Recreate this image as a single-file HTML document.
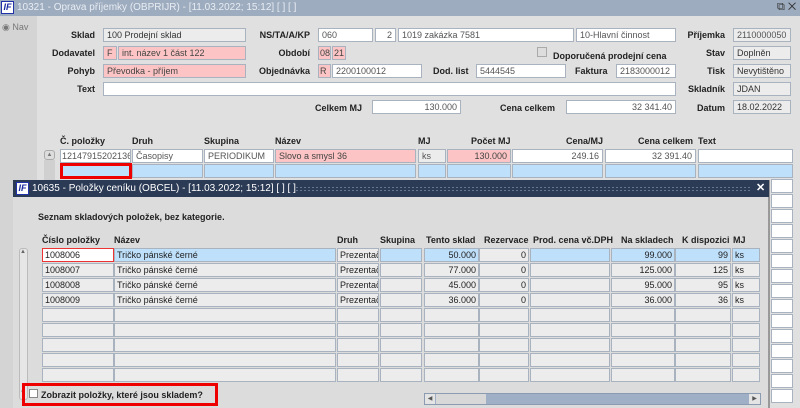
<!DOCTYPE html>
<html><head><meta charset="utf-8"><style>
*{box-sizing:border-box;margin:0;padding:0}
body{width:800px;height:408px;overflow:hidden;background:#dedede;font-family:"Liberation Sans",Arial,sans-serif;font-size:9px;color:#222;position:relative}
.a{position:absolute;white-space:nowrap}
.l{position:absolute;font-weight:bold;font-size:9px;text-align:right;white-space:nowrap;color:#222}
.f{position:absolute;height:14px;border:1px solid #a9b3bf;background:#fff;font-size:9px;line-height:12px;padding:0 3px;color:#555;white-space:nowrap;overflow:hidden}
.s{padding:0 1px}
.g{background:#ececec}.p{background:#fcc4c4;color:#444}.b{background:#bfe0fb}
.r{text-align:right}
.c{position:absolute;height:14px;border:1px solid #a9b3bf;background:#ececec;font-size:9px;line-height:12px;padding:0 2px;color:#222;overflow:hidden;white-space:nowrap}
.h{position:absolute;font-weight:bold;font-size:9px;white-space:nowrap}
</style></head><body>
<div class="a" style="left:0;top:0;width:800px;height:16px;background:#9eacbf"></div>
<div class="a" style="left:1px;top:1px;width:13px;height:13px;background:#fff;border:1px solid #2233aa;color:#1a2aa0;font-weight:bold;font-style:italic;font-size:9px;line-height:11px;text-align:center">IF</div>
<div class="a" style="left:17px;top:2px;color:#e8edf3;font-size:10px">10321 - Oprava příjemky (OBPRIJR) - [11.03.2022; 15:12] [ ] [ ]</div>
<div class="a" style="left:777px;top:1px;color:#333;font-size:11px">⧉ ✕</div>
<div class="a" style="left:0;top:16px;width:37px;height:392px;background:#d4d4d4"></div>
<div class="a" style="left:2px;top:22px;color:#777;font-size:9px">◉ Nav</div>
<div class="a" style="left:37px;top:16px;width:763px;height:392px;background:#e0e0e0"></div>

<div class="l" style="right:705px;top:30px">Sklad</div>
<div class="f g" style="left:103px;top:28px;width:143px;color:#333">100 Prodejní sklad</div>
<div class="l" style="right:490px;top:30px">NS/TA/A/KP</div>
<div class="f" style="left:318px;top:28px;width:55px">060</div>
<div class="f r" style="left:375px;top:28px;width:21px">2</div>
<div class="f" style="left:398px;top:28px;width:176px">1019 zakázka 7581</div>
<div class="f" style="left:576px;top:28px;width:100px">10-Hlavní činnost</div>
<div class="l" style="right:75px;top:30px">Příjemka</div>
<div class="f g" style="left:733px;top:28px;width:58px">2110000050</div>

<div class="l" style="right:705px;top:48px">Dodavatel</div>
<div class="f p" style="left:103px;top:46px;width:14px">F</div>
<div class="f p" style="left:118px;top:46px;width:128px">int. název 1 část 122</div>
<div class="l" style="right:490px;top:48px">Období</div>
<div class="f p s" style="left:318px;top:46px;width:13px">08</div>
<div class="f p s" style="left:332px;top:46px;width:14px">21</div>
<div class="a" style="left:537px;top:47px;width:10px;height:10px;border:1px solid #aaa;background:#ddd"></div>
<div class="l" style="left:553px;top:51px">Doporučená prodejní cena</div>
<div class="l" style="right:75px;top:48px">Stav</div>
<div class="f g" style="left:733px;top:46px;width:58px;color:#333">Doplněn</div>

<div class="l" style="right:705px;top:66px">Pohyb</div>
<div class="f p" style="left:103px;top:64px;width:143px">Převodka - příjem</div>
<div class="l" style="right:490px;top:66px">Objednávka</div>
<div class="f p s" style="left:318px;top:64px;width:13px">R</div>
<div class="f" style="left:332px;top:64px;width:90px">2200100012</div>
<div class="l" style="left:433px;top:66px">Dod. list</div>
<div class="f" style="left:476px;top:64px;width:90px">5444545</div>
<div class="l" style="left:575px;top:66px">Faktura</div>
<div class="f" style="left:616px;top:64px;width:60px">2183000012</div>
<div class="l" style="right:75px;top:66px">Tisk</div>
<div class="f g" style="left:733px;top:64px;width:58px;color:#333">Nevytištěno</div>

<div class="l" style="right:705px;top:84px">Text</div>
<div class="f" style="left:103px;top:82px;width:573px"></div>
<div class="l" style="right:75px;top:84px">Skladník</div>
<div class="f g" style="left:733px;top:82px;width:58px;color:#333">JDAN</div>

<div class="l" style="left:315px;top:103px">Celkem MJ</div>
<div class="f r" style="left:372px;top:100px;width:89px">130.000</div>
<div class="l" style="left:500px;top:103px">Cena celkem</div>
<div class="f r" style="left:566px;top:100px;width:110px">32 341.40</div>
<div class="l" style="right:75px;top:103px">Datum</div>
<div class="f g" style="left:733px;top:100px;width:58px;color:#333">18.02.2022</div>

<div class="h" style="left:60px;top:136px">Č. položky</div>
<div class="h" style="left:132px;top:136px">Druh</div>
<div class="h" style="left:204px;top:136px">Skupina</div>
<div class="h" style="left:275px;top:136px">Název</div>
<div class="h" style="left:418px;top:136px">MJ</div>
<div class="h" style="left:471px;top:136px">Počet MJ</div>
<div class="h" style="left:566px;top:136px">Cena/MJ</div>
<div class="h" style="left:638px;top:136px">Cena celkem</div>
<div class="h" style="left:698px;top:136px">Text</div>
<div class="a" style="left:44px;top:150px;width:11px;height:10px;border:1px solid #aaa;border-radius:3px;background:#ddd;font-size:6px;text-align:center;line-height:8px;color:#777">▲</div>
<div class="a" style="left:44px;top:160px;width:11px;height:20px;background:#d0d0d0"></div>
<div class="f" style="left:60px;top:149px;width:71px;padding:0 1px">12147915202136</div>
<div class="f" style="left:132px;top:149px;width:71px">Časopisy</div>
<div class="f" style="left:204px;top:149px;width:70px">PERIODIKUM</div>
<div class="f p" style="left:275px;top:149px;width:141px">Slovo a smysl 36</div>
<div class="f g" style="left:418px;top:149px;width:28px">ks</div>
<div class="f p r" style="left:447px;top:149px;width:64px">130.000</div>
<div class="f r" style="left:512px;top:149px;width:91px">249.16</div>
<div class="f r" style="left:605px;top:149px;width:91px">32 391.40</div>
<div class="f" style="left:698px;top:149px;width:95px"></div>
<div class="f b" style="left:132px;top:164px;width:71px"></div>
<div class="f b" style="left:204px;top:164px;width:70px"></div>
<div class="f b" style="left:275px;top:164px;width:141px"></div>
<div class="f b" style="left:418px;top:164px;width:28px"></div>
<div class="f b" style="left:447px;top:164px;width:64px"></div>
<div class="f b" style="left:512px;top:164px;width:91px"></div>
<div class="f b" style="left:605px;top:164px;width:91px"></div>
<div class="f b" style="left:698px;top:164px;width:95px"></div>
<div class="a" style="left:60px;top:163px;width:72px;height:16px;border:3px solid #e00;background:#bfe0fb"></div>
<div id="rc"></div>

<div class="a" style="left:13px;top:180px;width:757px;height:228px;background:#dcdcdc;border-right:2px solid #999"></div>
<div class="a" style="left:13px;top:180px;width:756px;height:17px;background:#2b3a55"></div>
<div class="a" style="left:16px;top:182px;width:13px;height:13px;background:#fff;border:1px solid #2233aa;color:#1a2aa0;font-weight:bold;font-style:italic;font-size:9px;line-height:11px;text-align:center">IF</div>
<div class="a" style="left:32px;top:183px;color:#fff;font-size:10px">10635 - Položky ceníku (OBCEL) - [11.03.2022; 15:12] [ ] [ ]</div>
<div class="a" style="left:295px;top:186px;width:455px;height:6px;background-image:radial-gradient(#6a7a95 0.8px,transparent 1px);background-size:4px 3px"></div>
<div class="a" style="left:756px;top:181px;color:#fff;font-size:11px;font-weight:bold">✕</div>
<div class="l" style="left:38px;top:212px">Seznam skladových položek, bez kategorie.</div>

<div class="h" style="left:42px;top:235px">Číslo položky</div>
<div class="h" style="left:114px;top:235px">Název</div>
<div class="h" style="left:337px;top:235px">Druh</div>
<div class="h" style="left:380px;top:235px">Skupina</div>
<div class="h" style="left:426px;top:235px">Tento sklad</div>
<div class="h" style="left:484px;top:235px">Rezervace</div>
<div class="h" style="left:533px;top:235px">Prod. cena vč.DPH</div>
<div class="h" style="left:621px;top:235px">Na skladech</div>
<div class="h" style="left:682px;top:235px">K dispozici</div>
<div class="h" style="left:733px;top:235px">MJ</div>
<div class="a" style="left:19px;top:248px;width:9px;height:152px;background:#e6e6e6;border:1px solid #bbb;border-radius:3px"></div>
<div class="a" style="left:20px;top:249px;font-size:6px;color:#666">▲</div>
<div class="a" style="left:20px;top:390px;font-size:6px;color:#666">▼</div>

<div id="grid"></div>
<script>
var rc="";for(var i=0;i<15;i++)rc+='<div class="f" style="left:771px;top:'+(179+i*15)+'px;width:22px"></div>';
document.getElementById('rc').innerHTML=rc;
var cols=[[42,72],[114,222],[337,42],[380,42],[424,55],[479,50],[530,80],[611,64],[675,56],[732,28]];
var data=[["1008006","Tričko pánské černé","Prezentač","","50.000","0","","99.000","99","ks"],
["1008007","Tričko pánské černé","Prezentač","","77.000","0","","125.000","125","ks"],
["1008008","Tričko pánské černé","Prezentač","","45.000","0","","95.000","95","ks"],
["1008009","Tričko pánské černé","Prezentač","","36.000","0","","36.000","36","ks"]];
var right=[4,5,7,8];var h="";
for(var r=0;r<9;r++){for(var c=0;c<10;c++){var t=data[r]?data[r][c]:"";var bg="";
if(r==0&&c!=0&&c!=2&&c!=5)bg="background:#bfe0fb;";
if(r==0&&c==0)bg="background:#fff;border:1px solid #e33;";
h+='<div class="c" style="'+bg+'left:'+cols[c][0]+'px;top:'+(248+r*15)+'px;width:'+cols[c][1]+'px;'+(right.indexOf(c)>=0?'text-align:right':'')+'">'+t+'</div>';}}
document.getElementById('grid').innerHTML=h;
</script>
<div class="a" style="left:22px;top:383px;width:196px;height:23px;border:3px solid #e00"></div>
<div class="a" style="left:29px;top:389px;width:9px;height:9px;border:1px solid #888;background:#fff"></div>
<div class="l" style="left:41px;top:390px">Zobrazit položky, které jsou skladem?</div>
<div class="a" style="left:424px;top:393px;width:337px;height:12px;background:#9fb0c6;border:1px solid #8a9bb2"></div>
<div class="a" style="left:425px;top:394px;width:10px;height:10px;background:#e4e4e4;font-size:6px;color:#555;line-height:10px;text-align:center">◀</div>
<div class="a" style="left:436px;top:394px;width:50px;height:10px;background:#d8d8d8"></div>
<div class="a" style="left:749px;top:394px;width:11px;height:10px;background:#e4e4e4;font-size:6px;color:#555;line-height:10px;text-align:center">▶</div>
</body></html>
